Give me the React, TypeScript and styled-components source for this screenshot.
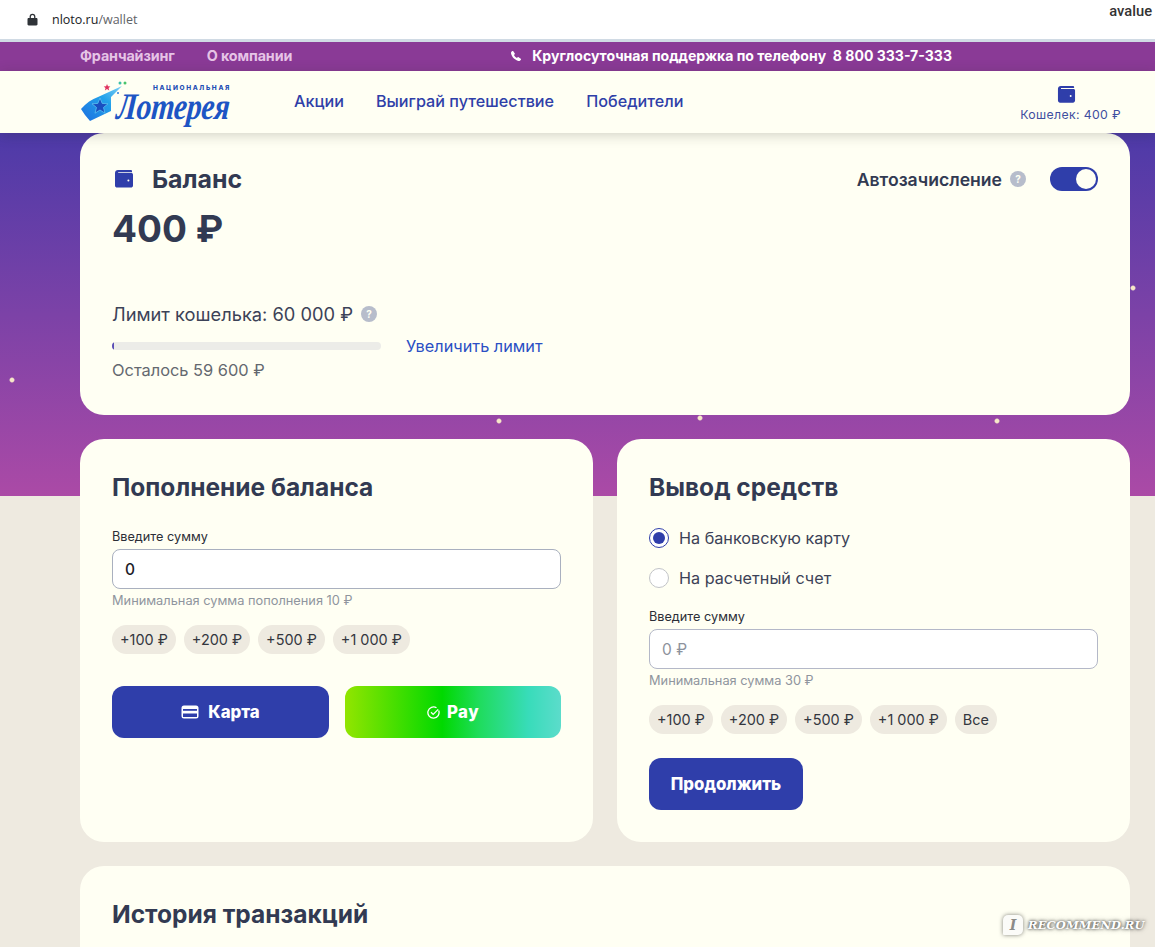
import React from "react";
import styled, { createGlobalStyle } from "styled-components";

const Global = createGlobalStyle`
  html, body { margin: 0; padding: 0; }
  body { font-family: Inter, "Noto Sans", "Liberation Sans", sans-serif; background: #eeeae0; }
`;

const Page = styled.div`
  position: relative;
  width: 1155px;
  height: 947px;
  overflow: hidden;
  background: #eeeae0;
`;

const Chrome = styled.div`
  height: 39px;
  border-bottom: 3px solid #d0dae4;
  background: #fff;
  display: flex;
  align-items: flex-start;
  padding: 0 3px 0 27px;
`;
const Url = styled.div`
  display: flex;
  align-items: center;
  gap: 14px;
  height: 38px;
  font-family: "Open Sans", sans-serif;
  font-size: 12.5px;
  color: #202124;
  span { color: #5f6368; }
`;
const Avalue = styled.div`
  margin-left: auto;
  padding-top: 2px;
  font-family: Roboto, sans-serif;
  font-weight: 500;
  font-size: 14.7px;
  color: #333;
`;

const TopBar = styled.div`
  height: 29px;
  padding: 0 80px 2px;
  box-sizing: border-box;
  background: #8a3a96;
  display: flex;
  align-items: center;
  font-size: 14.3px;
  font-weight: 700;
`;
const TopLink = styled.a`
  color: #e6c4e6;
  margin-right: 32px;
  letter-spacing: -0.1px;
`;
const Support = styled.div`
  margin-left: 186px;
  display: flex;
  align-items: center;
  gap: 10px;
  font-size: 14.05px;
  color: #fff;
  white-space: pre;
`;

const Header = styled.header`
  height: 62px;
  background: #fffff3;
  display: flex;
  align-items: center;
  padding: 0 34px 0 80px;
  position: relative;
  z-index: 2;
  box-shadow: 0 2px 12px rgba(40, 40, 30, 0.22);
`;
const Logo = styled.div`
  position: relative;
  box-sizing: border-box;
  width: 150px;
  height: 46px;
  margin-right: 2px;
  padding-top: 5px;
  display: flex;
  flex-direction: column;
  align-items: flex-end;
  flex: none;
`;
const LogoSmall = styled.span`
  font-size: 6.5px;
  line-height: 8px;
  font-weight: 800;
  letter-spacing: 1.65px;
  margin-right: -1px;
  color: #1f4fb5;
  white-space: nowrap;
`;
const LogoScript = styled.span`
  font-family: "Liberation Serif", serif;
  font-style: italic;
  font-weight: 700;
  font-size: 30px;
  line-height: 28px;
  letter-spacing: -0.4px;
  color: #1d55c4;
  white-space: nowrap;
  transform: scaleY(1.25) skewX(-6deg);
  transform-origin: 50% 40%;
`;
const Nav = styled.nav`
  display: flex;
  gap: 32px;
  margin: 0 0 2px 62px;
  font-size: 16.2px;
  font-weight: 500;
  color: #2f3fa8;
`;
const WalletBox = styled.div`
  margin-left: auto;
  display: flex;
  flex-direction: column;
  align-items: center;
  gap: 3px;
  font-size: 12.3px;
  letter-spacing: 0.35px;
  color: #3f4fa0;
  padding-top: 2px;
  svg { margin-right: 8px; }
`;

const Hero = styled.main`
  padding: 0 25px 0 80px;
  display: flex;
  flex-direction: column;
  gap: 24px;
  background-color: #eeeae0;
  background-image:
    radial-gradient(circle 3px at 12px 247px, #f6e7c8 60%, transparent 100%),
    radial-gradient(circle 3px at 1133px 155px, #f6e7c8 60%, transparent 100%),
    radial-gradient(circle 3px at 499px 288px, #f6e7c8 60%, transparent 100%),
    radial-gradient(circle 3px at 700px 285px, #f6e7c8 60%, transparent 100%),
    radial-gradient(circle 3px at 997px 288px, #f6e7c8 60%, transparent 100%),
    linear-gradient(180deg, #4d3aa8 0%, #ab4aa6 100%);
  background-size: 100% 363px;
  background-repeat: no-repeat;
`;

const Card = styled.section`
  background: #fffff3;
  border-radius: 24px;
  box-sizing: border-box;
  padding: 32px;
  flex: none;
`;
const BalanceCard = styled(Card)`
  height: 282px;
  padding-top: 30px;
`;
const BalanceTop = styled.div`
  display: flex;
  align-items: center;
  height: 32px;
  svg { margin-left: 2px; }
`;
const BalanceTitle = styled.h2`
  margin: 0 0 0 18px;
  font-size: 24.9px;
  font-weight: 700;
  color: #323a52;
`;
const Auto = styled.div`
  margin-left: auto;
  display: flex;
  align-items: center;
  font-size: 17.6px;
  font-weight: 600;
  color: #323a52;
`;
const Hint = styled.span`
  display: inline-flex;
  align-items: center;
  justify-content: center;
  width: 16px;
  height: 16px;
  border-radius: 50%;
  background: #b7bdcb;
  color: #fffff3;
  font-size: 10px;
  font-weight: 700;
`;
const AutoHint = styled(Hint)`
  margin: 0 24px 0 8px;
`;
const Toggle = styled.span`
  display: flex;
  justify-content: flex-end;
  align-items: center;
  box-sizing: border-box;
  width: 48px;
  height: 24px;
  padding: 2px;
  border-radius: 12px;
  background: #2f3eaa;
  &::after {
    content: "";
    width: 20px;
    height: 20px;
    border-radius: 50%;
    background: #fffff3;
  }
`;
const Amount = styled.div`
  margin-top: 10px;
  font-size: 37px;
  line-height: 48px;
  font-weight: 700;
  color: #323a52;
`;
const LimitLine = styled.div`
  margin-top: 49px;
  display: flex;
  align-items: center;
  gap: 8px;
  font-size: 18.3px;
  line-height: 24px;
  color: #3c4257;
`;
const ProgressRow = styled.div`
  margin-top: 8px;
  display: flex;
  align-items: center;
  gap: 25px;
  height: 24px;
`;
const Track = styled.div`
  width: 269px;
  height: 8px;
  border-radius: 4px;
  background: #ecece8;
  overflow: hidden;
`;
const Fill = styled.div`
  height: 100%;
  background: #5a4db5;
`;
const MoreLink = styled.a`
  font-size: 16.3px;
  font-weight: 400;
  color: #2a4fc4;
`;
const Left = styled.div`
  font-size: 16.4px;
  line-height: 24px;
  color: #64686f;
`;

const Columns = styled.div`
  display: grid;
  grid-template-columns: 513px 513px;
  gap: 24px;
  flex: none;
`;
const ColCard = styled(Card)`
  height: 403px;
  padding-top: 31px;
`;
const H2 = styled.h2`
  margin: 0;
  font-size: 24.5px;
  line-height: 34px;
  font-weight: 700;
  color: #323a52;
`;
const Label = styled.div<{ $top: number }>`
  margin-top: ${p => p.$top}px;
  font-size: 12.7px;
  line-height: 16px;
  color: #2b2e36;
`;
const Input = styled.div<{ $muted?: boolean }>`
  margin-top: 4px;
  box-sizing: border-box;
  height: 40px;
  display: flex;
  align-items: center;
  padding: 0 12px;
  background: #fff;
  border: 1px solid ${p => (p.$muted ? "#b4b8c8" : "#a9b0bf")};
  border-radius: 8px;
  font-size: 15.5px;
  font-weight: ${p => (p.$muted ? 400 : 500)};
  color: ${p => (p.$muted ? "#8d929c" : "#1d2028")};
`;
const Help = styled.div`
  margin-top: 4px;
  font-size: 12.8px;
  line-height: 16px;
  color: #8f959e;
`;
const Chips = styled.div`
  margin-top: 16px;
  display: flex;
  gap: 8px;
`;
const Chip = styled.span`
  height: 29px;
  padding: 0 8px;
  display: inline-flex;
  align-items: center;
  border-radius: 15px;
  background: #eeeae0;
  font-size: 14.45px;
  color: #33363e;
  white-space: nowrap;
`;
const Buttons = styled.div`
  margin-top: 32px;
  display: grid;
  grid-template-columns: 217px 216px;
  gap: 16px;
`;
const Btn = styled.button`
  height: 52px;
  border: 0;
  border-radius: 12px;
  display: flex;
  align-items: center;
  justify-content: center;
  gap: 9px;
  font-family: inherit;
  font-size: 16.8px;
  font-weight: 800;
  color: #fff;
  background: #2f3eaa;
`;
const PayBtn = styled(Btn)`
  gap: 7px;
  letter-spacing: 0.5px;
  background: linear-gradient(90deg, #92e500 0%, #00d900 45%, #1fdc5c 62%, #38dcba 85%, #5cdccb 100%);
`;
const ContinueBtn = styled(Btn)`
  margin-top: 24px;
  width: 154px;
`;
const RadioList = styled.div`
  margin-top: 22px;
  display: flex;
  flex-direction: column;
  gap: 16px;
`;
const RadioRow = styled.div`
  display: flex;
  align-items: center;
  gap: 10px;
  height: 24px;
  font-size: 16.2px;
  color: #3c4257;
`;
const Radio = styled.span<{ $on?: boolean }>`
  box-sizing: border-box;
  width: 20px;
  height: 20px;
  border-radius: 50%;
  border: 1px solid ${p => (p.$on ? "#2f3eaa" : "#c2c4c8")};
  background: #fff;
  display: flex;
  align-items: center;
  justify-content: center;
  &::after {
    content: "";
    width: 12px;
    height: 12px;
    border-radius: 50%;
    background: ${p => (p.$on ? "#2f3eaa" : "transparent")};
  }
`;
const HistoryCard = styled(Card)`
  height: 120px;
  padding-top: 31px;
`;
const Watermark = styled.div`
  position: absolute;
  left: 1003px;
  top: 915px;
  display: flex;
  align-items: center;
  gap: 5px;
  color: #fff;
  font-family: "DejaVu Serif", serif;
  font-style: italic;
  font-weight: 700;
  font-size: 11.5px;
  letter-spacing: 0.1px;
  text-shadow: 0 0 3px rgba(0, 0, 0, 0.75), 0 0 5px rgba(0, 0, 0, 0.5);
`;
const WatermarkIcon = styled.span`
  width: 20px;
  height: 20px;
  border-radius: 5px 5px 5px 1px;
  background: #fbfbf8;
  box-shadow: 0 0 4px rgba(0, 0, 0, 0.5);
  color: #8b8b88;
  font-size: 14px;
  text-shadow: none;
  text-align: center;
  line-height: 20px;
`;

const Wallet = ({ size = 20 }: { size?: number }) => (
  <svg width={size} height={size} viewBox="0 0 20 20" fill="#2f3eaa">
    <path d="M4 1h13a1 1 0 0 1 1 1v1.200H4.200v.9H17.400c.9 0 1.600.7 1.600 1.600v10.700c0 1.300-1 2.200-2.200 2.200H3.200C2 18.600 1 17.700 1 16.400V4C1 2.300 2.300 1 4 1Z" />
    <circle cx="14.400" cy="11.600" r="1" fill="#fffff3" />
  </svg>
);

const LogoMark = () => (
  <svg width="62" height="46" viewBox="0 0 62 46" style={{ position: "absolute", left: 0, top: 0 }}>
    <defs>
      <linearGradient id="lg" x1="0" y1="1" x2="1" y2="0">
        <stop offset="0" stopColor="#1d6fe0" />
        <stop offset="0.6" stopColor="#23a2ea" />
        <stop offset="1" stopColor="#7fd0f5" />
      </linearGradient>
    </defs>
    <path d="M1 30C6 24 12 20 18 18L42 7 31 18 31 32 10 42 5 36Z" fill="url(#lg)" />
    <path d="M20 19l2.200 5.400 5.800.4-4.500 3.700 1.500 5.700-5-3.200-5 3.200 1.500-5.700-4.500-3.700 5.800-.4Z" fill="#1a4fc0" stroke="#5cc0f0" strokeWidth="0.800" />
    <path d="M27 5l1 2.300 2.400.1-1.800 1.600.6 2.400-2.200-1.300-2.100 1.300.6-2.400-1.800-1.600 2.400-.1Z" fill="#e0335f" />
    <circle cx="40" cy="4" r="1.500" fill="#3bbfa8" />
    <circle cx="45" cy="4" r="1.500" fill="#48c46c" />
    <circle cx="38" cy="14" r="1" fill="#2a7de0" />
  </svg>
);

export default function App() {
  return (
    <Page>
      <Global />
      <Chrome>
        <Url>
          <svg width="11" height="13" viewBox="0 0 11 13" fill="#2f3338">
            <path d="M2.600 5V3.600a2.900 2.900 0 0 1 5.800 0V5h.9c.7 0 1.200.5 1.200 1.200v5c0 .7-.5 1.200-1.200 1.200H1.700C1 12.400.5 11.900.5 11.200v-5C.5 5.500 1 5 1.700 5Zm1.300 0h3.200V3.600a1.600 1.600 0 0 0-3.200 0Z" />
          </svg>
          <div>nloto.ru<span>/wallet</span></div>
        </Url>
        <Avalue>avalue</Avalue>
      </Chrome>
      <TopBar>
        <TopLink>Франчайзинг</TopLink>
        <TopLink>О компании</TopLink>
        <Support>
          <svg width="12" height="12" viewBox="0 0 24 24" fill="#fff">
            <path d="M6.600 2.500l3 4.300c.4.600.3 1.300-.2 1.800L7.800 10.200c1.300 2.700 3.300 4.700 6 6l1.600-1.600c.5-.5 1.200-.6 1.800-.2l4.300 3c.7.5.8 1.400.3 2-1.300 1.700-3 3-5 2.500C9.600 20.300 3.700 14.400 2.100 7.200 1.600 5.200 2.900 3.500 4.600 2.200c.6-.5 1.500-.4 2 .3Z" />
          </svg>
          <span>Круглосуточная поддержка по телефону  8 800 333-7-333</span>
        </Support>
      </TopBar>
      <Header>
        <Logo>
          <LogoMark />
          <LogoSmall>НАЦИОНАЛЬНАЯ</LogoSmall>
          <LogoScript>Лотерея</LogoScript>
        </Logo>
        <Nav>
          <span>Акции</span>
          <span>Выиграй путешествие</span>
          <span>Победители</span>
        </Nav>
        <WalletBox>
          <Wallet size={19} />
          <span>Кошелек: 400 ₽</span>
        </WalletBox>
      </Header>
      <Hero>
        <BalanceCard>
          <BalanceTop>
            <Wallet />
            <BalanceTitle>Баланс</BalanceTitle>
            <Auto>
              Автозачисление
              <AutoHint>?</AutoHint>
              <Toggle />
            </Auto>
          </BalanceTop>
          <Amount>400 ₽</Amount>
          <LimitLine>
            Лимит кошелька: 60 000 ₽
            <Hint>?</Hint>
          </LimitLine>
          <ProgressRow>
            <Track>
              <Fill style={{ width: `${(400 / 60000) * 100}%`, minWidth: 2 }} />
            </Track>
            <MoreLink>Увеличить лимит</MoreLink>
          </ProgressRow>
          <Left>Осталось 59 600 ₽</Left>
        </BalanceCard>
        <Columns>
          <ColCard>
            <H2>Пополнение баланса</H2>
            <Label $top={25}>Введите сумму</Label>
            <Input>0</Input>
            <Help>Минимальная сумма пополнения 10 ₽</Help>
            <Chips>
              <Chip>+100 ₽</Chip>
              <Chip>+200 ₽</Chip>
              <Chip>+500 ₽</Chip>
              <Chip>+1 000 ₽</Chip>
            </Chips>
            <Buttons>
              <Btn>
                <svg width="18" height="14" viewBox="0 0 18 14">
                  <rect x="0.500" y="0.500" width="17" height="13" rx="2.500" fill="#fff" />
                  <rect x="2" y="4" width="14" height="1.800" fill="#2f3eaa" />
                  <rect x="2" y="8.500" width="14" height="3.500" fill="#2f3eaa" />
                </svg>
                Карта
              </Btn>
              <PayBtn>
                <svg width="13" height="13" viewBox="0 0 13 13" fill="none" stroke="#fff" strokeWidth="1.300">
                  <path d="M11.700 4.500A5.600 5.600 0 1 1 9.500 1.800" />
                  <path d="M4 6.200l2.200 2.200 5-5" />
                </svg>
                Pay
              </PayBtn>
            </Buttons>
          </ColCard>
          <ColCard>
            <H2>Вывод средств</H2>
            <RadioList>
              <RadioRow><Radio $on />На банковскую карту</RadioRow>
              <RadioRow><Radio />На расчетный счет</RadioRow>
            </RadioList>
            <Label $top={19}>Введите сумму</Label>
            <Input $muted>0 ₽</Input>
            <Help>Минимальная сумма 30 ₽</Help>
            <Chips>
              <Chip>+100 ₽</Chip>
              <Chip>+200 ₽</Chip>
              <Chip>+500 ₽</Chip>
              <Chip>+1 000 ₽</Chip>
              <Chip>Все</Chip>
            </Chips>
            <ContinueBtn>Продолжить</ContinueBtn>
          </ColCard>
        </Columns>
        <HistoryCard>
          <H2>История транзакций</H2>
        </HistoryCard>
      </Hero>
      <Watermark>
        <WatermarkIcon>I</WatermarkIcon>
        RECOMMEND.RU
      </Watermark>
    </Page>
  );
}
